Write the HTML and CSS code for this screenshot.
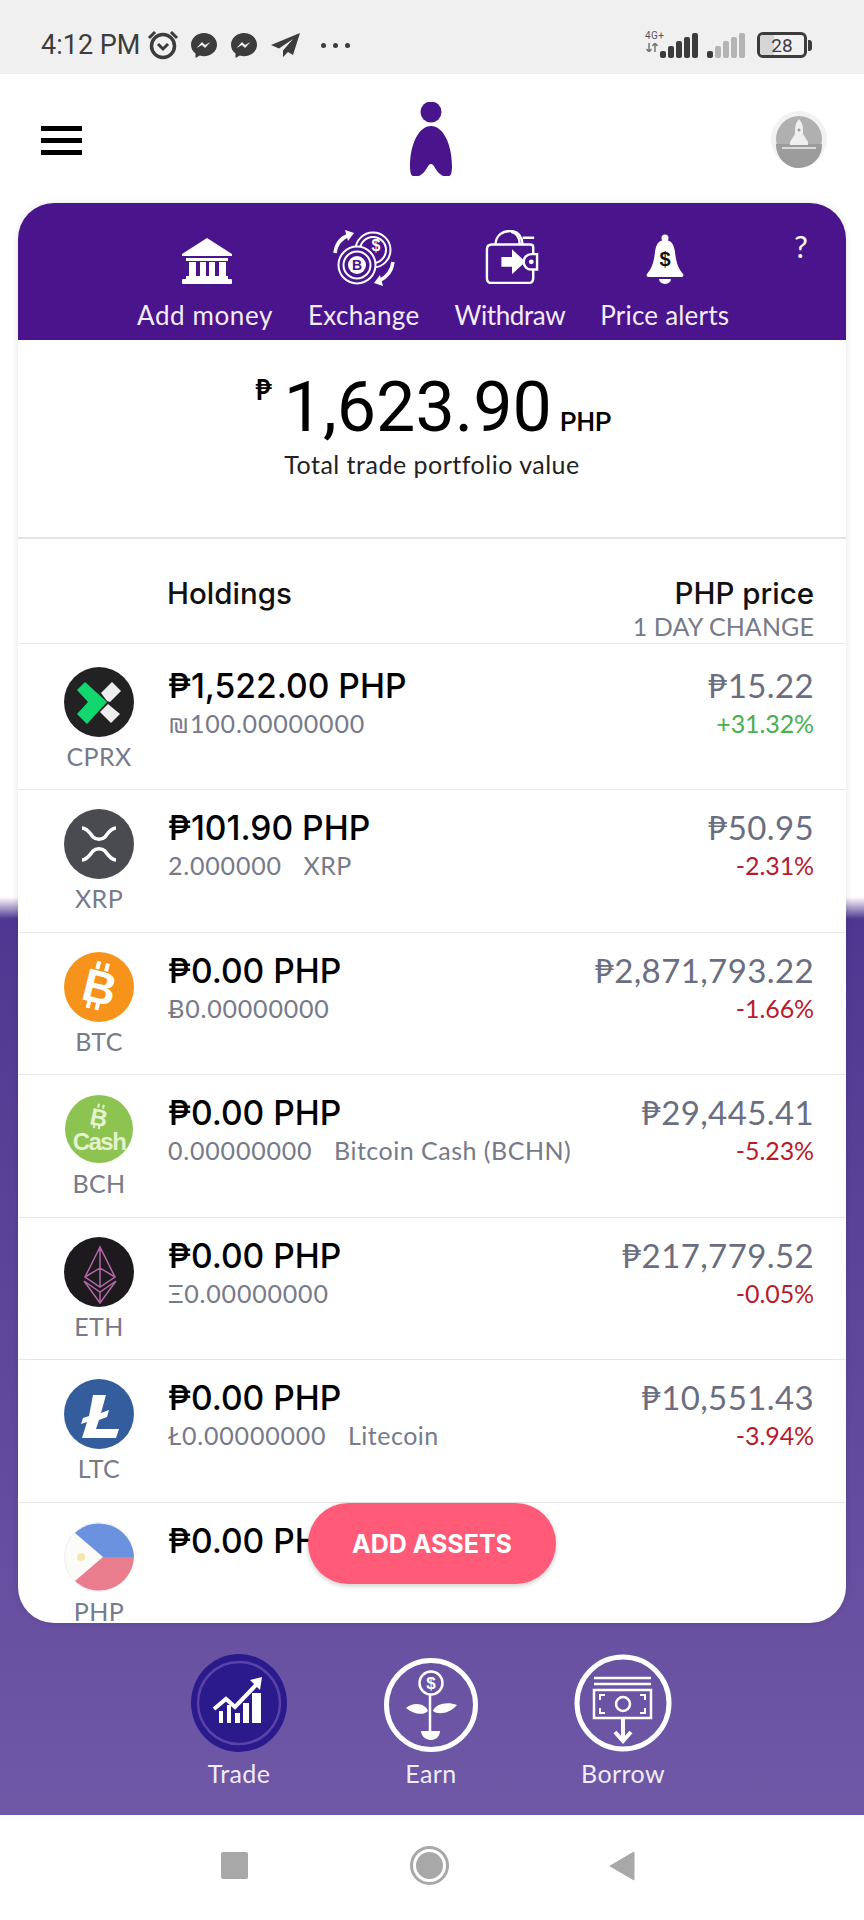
FILE: index.html
```html
<!DOCTYPE html>
<html lang="en">
<head>
    <meta charset="UTF-8">
    <meta name="viewport" content="width=device-width, initial-scale=1.0">
    <title>Trade portfolio</title>
    <link rel="stylesheet" href="styles.css">
</head>
<body>

    <!-- STATUS BAR -->
    <div class="status-bar">
        <div class="status-left">
            <span class="status-time">4:12 PM</span>
            <svg class="st-alarm" width="32" height="30" viewBox="0 0 32 30">
                <circle cx="16" cy="16" r="11.5" fill="none" stroke="#3c3c3c" stroke-width="3.5"/>
                <path d="M11 14l5 5 5-5" fill="none" stroke="#3c3c3c" stroke-width="3"/>
                <path d="M2 8l6-6M30 8l-6-6" stroke="#3c3c3c" stroke-width="3"/>
            </svg>
            <svg class="st-msg" width="26" height="25" viewBox="0 0 26 25">
                <path d="M13 0C5.800 0 0 5.200 0 11.800c0 3.600 1.700 6.600 4.500 8.700V25l4.300-2.400c1.300.4 2.700.6 4.200.6 7.200 0 13-5 13-11.400S20.200 0 13 0z" fill="#3c3c3c"/>
                <path d="M5.500 15l5.500-6 3 3 5.500-3-5.500 6-3-3z" fill="#f0f0f0"/>
            </svg>
            <svg class="st-msg" width="26" height="25" viewBox="0 0 26 25">
                <path d="M13 0C5.800 0 0 5.200 0 11.800c0 3.600 1.700 6.600 4.500 8.700V25l4.300-2.400c1.300.4 2.700.6 4.200.6 7.200 0 13-5 13-11.400S20.200 0 13 0z" fill="#3c3c3c"/>
                <path d="M5.500 15l5.500-6 3 3 5.500-3-5.500 6-3-3z" fill="#f0f0f0"/>
            </svg>
            <svg class="st-plane" width="29" height="24" viewBox="0 0 29 24">
                <path d="M29 0L0 12l8 3.500L22 6 12 17.500V24l5-5 5 3z" fill="#3c3c3c"/>
            </svg>
            <span class="st-dots"><i></i><i></i><i></i></span>
        </div>
        <div class="status-right">
            <div class="st-net">
                <span class="st-4g">4G+</span>
                <svg width="14" height="9" viewBox="0 0 14 9"><path d="M4 0v9M1.500 6L4 9l2.500-3M10 9V0M7.500 3L10 0l2.500 3" fill="none" stroke="#777" stroke-width="1.500"/></svg>
            </div>
            <svg class="st-bars" width="38" height="25" viewBox="0 0 38 25">
                <rect x="0" y="18" width="6" height="7" rx="2" fill="#3c3c3c"/><rect x="8" y="13" width="6" height="12" rx="2" fill="#3c3c3c"/><rect x="16" y="8" width="6" height="17" rx="2" fill="#3c3c3c"/><rect x="24" y="4" width="6" height="21" rx="2" fill="#3c3c3c"/><rect x="32" y="0" width="6" height="25" rx="2" fill="#3c3c3c"/>
            </svg>
            <svg class="st-bars" width="38" height="25" viewBox="0 0 38 25">
                <rect x="0" y="18" width="6" height="7" rx="2" fill="#3c3c3c"/><rect x="8" y="13" width="6" height="12" rx="2" fill="#b4b4b4"/><rect x="16" y="8" width="6" height="17" rx="2" fill="#b4b4b4"/><rect x="24" y="4" width="6" height="21" rx="2" fill="#b4b4b4"/><rect x="32" y="0" width="6" height="25" rx="2" fill="#b4b4b4"/>
            </svg>
            <div class="battery"><span class="battery-level"></span><span class="battery-num">28</span></div>
            <span class="battery-nub"></span>
        </div>
    </div>

    <!-- HEADER -->
    <div class="app-header">
        <div class="burger"><i></i><i></i><i></i></div>
        <svg class="logo" width="44" height="74" viewBox="0 0 44 74">
            <ellipse cx="22" cy="10" rx="10.500" ry="10.500" fill="#4a148c"/>
            <path d="M22 24C10 24 1 42 1 64c0 6 1 10 3 10h6c4-2 6-5 8-8 1.500-3 2.500-4 4-4s2.500 1 4 4c2 3 4 6 8 8h6c2 0 3-4 3-10C43 42 34 24 22 24z" fill="#4a148c"/>
        </svg>
        <svg class="avatar" width="58" height="58" viewBox="0 0 58 58">
            <circle cx="29" cy="29" r="28" fill="#f2f2f2"/>
            <circle cx="29" cy="29" r="23" fill="#b0b0b0"/>
            <path d="M6 34h46a23 23 0 0 1-46 2z" fill="#9c9c9c"/>
            <path d="M29 9c3 3 4 7 4 11v4l5 8v3H20v-3l5-8v-4c0-4 1-8 4-11z" fill="#efefef"/>
            <path d="M12 38h34" stroke="#efefef" stroke-width="1.500"/>
            <circle cx="29" cy="20" r="1.500" fill="#999"/>
        </svg>
    </div>

    <div class="main">
        <div class="card">

            <!-- ACTIONS -->
            <div class="actions">
                <div class="action">
                    <svg class="ic-bank" width="52" height="46" viewBox="0 0 52 46" fill="#fff">
                        <path d="M26 0l25 16v2H1v-2z"/>
                        <rect x="5" y="20" width="42" height="3"/>
                        <rect x="8" y="24" width="7" height="14"/><rect x="19" y="24" width="6" height="14"/><rect x="28" y="24" width="6" height="14"/><rect x="38" y="24" width="7" height="14"/>
                        <rect x="5" y="38" width="42" height="3"/>
                        <rect x="1" y="41" width="50" height="5" rx="1"/>
                    </svg>
                    <span>Add money</span>
                </div>
                <div class="action action-exchange">
                    <svg class="ic-exchange" width="64" height="58" viewBox="0 0 64 58" fill="none" stroke="#fff" stroke-width="2">
                        <circle cx="41" cy="21" r="17.500"/>
                        <circle cx="41" cy="21" r="13"/>
                        <circle cx="25" cy="36" r="18.500" fill="#4a148c"/>
                        <circle cx="25" cy="36" r="13.500"/>
                        <circle cx="25" cy="36" r="9" fill="#fff" stroke="none"/>
                        <text x="25" y="41" class="coin-b">B</text>
                        <text x="44" y="22" class="coin-d">$</text>
                        <path d="M3 24C4 15 9 9 17 6" stroke-width="3.500"/>
                        <path d="M13 1l9 3-6 8z" fill="#fff" stroke="none"/>
                        <path d="M61 33c-1 9-6 15-14 19" stroke-width="3.500"/>
                        <path d="M51 57l-9-3 6-8z" fill="#fff" stroke="none"/>
                    </svg>
                    <span>Exchange</span>
                </div>
                <div class="action action-withdraw">
                    <svg class="ic-wallet" width="54" height="54" viewBox="0 0 54 56" fill="none" stroke="#fff" stroke-width="2.500">
                        <path d="M10 15C10 5 18 1 25 1c8 0 12 4 13 14"/>
                        <path d="M26 2c6 1 9 6 9 13M38 8h12"/>
                        <path d="M49 25v-7c0-2-1-3-3-3H6c-3 0-5 2-5 5v30c0 3 2 5 5 5h38c3 0 5-2 5-5v-9"/>
                        <path d="M16 28h11v-8l14 13-14 13v-8H16z" fill="#fff" stroke="none"/>
                        <path d="M53 25h-6a8 8 0 0 0 0 16h6z"/>
                        <circle cx="47" cy="33" r="2.500" fill="#fff" stroke="none"/>
                    </svg>
                    <span>Withdraw</span>
                </div>
                <div class="action action-alerts">
                    <svg width="38" height="50" viewBox="0 0 38 50" fill="#fff">
                        <circle cx="19" cy="4" r="3.500"/>
                        <path d="M19 6c7 0 9 5 10 12 1 8 2 15 8 22 1 1 0 3-1 3H2c-1 0-2-2-1-3 6-7 7-14 8-22 1-7 3-12 10-12z"/>
                        <path d="M13 45h12a6 5 0 0 1-12 0z"/>
                        <text x="19" y="32" class="bell-d">$</text>
                    </svg>
                    <span>Price alerts</span>
                </div>
                <div class="help">?</div>
            </div>

            <!-- TOTAL -->
            <div class="total">
                <div class="total-line">
                    <span class="total-cur">₱</span>
                    <span class="total-num">1,623.90</span>
                    <span class="total-php">PHP</span>
                </div>
                <div class="total-label">Total trade portfolio value</div>
            </div>

            <!-- HOLDINGS -->
            <div class="holdings-head">
                <div class="head-name">Holdings</div>
                <div class="head-right">
                    <div class="head-name">PHP price</div>
                    <div class="head-sub">1 DAY CHANGE</div>
                </div>
            </div>

            <div class="row row-first">
                <div class="coin">
                    <svg width="70" height="70" viewBox="0 0 70 70">
                        <circle cx="35" cy="35" r="35" fill="#222"/>
                        <path d="M21 15l22 20-20 22-10-10 11-12-11-12z" fill="#12d66e"/>
                        <path d="M48 15l9 9-11 11-3-1-6-8z" fill="#eee"/>
                        <path d="M44 37l12 10-9 9-11-11z" fill="#eee"/>
                    </svg>
                    <span>CPRX</span>
                </div>
                <div class="info">
                    <div class="amount">₱1,522.00 PHP</div>
                    <div class="sub">₪100.00000000</div>
                </div>
                <div class="quote">
                    <div class="price">₱15.22</div>
                    <div class="up">+31.32%</div>
                </div>
            </div>

            <div class="row">
                <div class="coin">
                    <svg width="70" height="70" viewBox="0 0 70 70">
                        <circle cx="35" cy="35" r="35" fill="#4a4b50"/>
                        <path d="M18 19c5 0 8 5 11 9 3 3 9 3 12 0 3-4 6-9 11-9M18 51c5 0 8-5 11-9 3-3 9-3 12 0 3 4 6 9 11 9" fill="none" stroke="#fff" stroke-width="3.500"/>
                    </svg>
                    <span>XRP</span>
                </div>
                <div class="info">
                    <div class="amount">₱101.90 PHP</div>
                    <div class="sub">2.000000 &nbsp; <span class="sub-name">XRP</span></div>
                </div>
                <div class="quote">
                    <div class="price">₱50.95</div>
                    <div class="down">-2.31%</div>
                </div>
            </div>

            <div class="row">
                <div class="coin">
                    <svg width="70" height="70" viewBox="0 0 70 70">
                        <circle cx="35" cy="35" r="35" fill="#f7931a"/>
                        <g transform="rotate(14 35 35)">
                            <text x="36" y="51" class="btc-b">B</text>
                            <path d="M29 10v8M38 10v8M29 50v8M38 50v8" stroke="#fff" stroke-width="4"/>
                        </g>
                    </svg>
                    <span>BTC</span>
                </div>
                <div class="info">
                    <div class="amount">₱0.00 PHP</div>
                    <div class="sub">Ƀ0.00000000</div>
                </div>
                <div class="quote">
                    <div class="price">₱2,871,793.22</div>
                    <div class="down">-1.66%</div>
                </div>
            </div>

            <div class="row">
                <div class="coin">
                    <svg width="70" height="70" viewBox="0 0 70 70">
                        <circle cx="35" cy="35" r="34" fill="#8dc351"/>
                        <g transform="rotate(12 35 24)">
                            <text x="35" y="32" class="bch-b">B</text>
                            <path d="M32 10v4M37 10v4M32 31v4M37 31v4" stroke="#e4f2cf" stroke-width="2"/>
                        </g>
                        <text x="35" y="56" class="bch-cash">Cash</text>
                    </svg>
                    <span>BCH</span>
                </div>
                <div class="info">
                    <div class="amount">₱0.00 PHP</div>
                    <div class="sub">0.00000000 &nbsp; <span class="sub-name">Bitcoin Cash (BCHN)</span></div>
                </div>
                <div class="quote">
                    <div class="price">₱29,445.41</div>
                    <div class="down">-5.23%</div>
                </div>
            </div>

            <div class="row">
                <div class="coin">
                    <svg width="70" height="70" viewBox="0 0 70 70">
                        <circle cx="35" cy="35" r="35" fill="#1c1a1d"/>
                        <path d="M36 10L21 40l15 10 15-10zM36 10v40M21 40l15-9 15 9M20 44l16 22 16-22-16 11zM36 55v9" fill="none" stroke="#b266a8" stroke-width="1.500"/>
                    </svg>
                    <span>ETH</span>
                </div>
                <div class="info">
                    <div class="amount">₱0.00 PHP</div>
                    <div class="sub">Ξ0.00000000</div>
                </div>
                <div class="quote">
                    <div class="price">₱217,779.52</div>
                    <div class="down">-0.05%</div>
                </div>
            </div>

            <div class="row">
                <div class="coin">
                    <svg width="70" height="70" viewBox="0 0 70 70">
                        <circle cx="35" cy="35" r="35" fill="#345d9d"/>
                        <path d="M29 16h13l-5 18 8-3-2 7-8 3-3 9h23l-3 9H18l5-16-6 2 2-6 6-2z" fill="#fff"/>
                    </svg>
                    <span>LTC</span>
                </div>
                <div class="info">
                    <div class="amount">₱0.00 PHP</div>
                    <div class="sub">Ł0.00000000 &nbsp; <span class="sub-name">Litecoin</span></div>
                </div>
                <div class="quote">
                    <div class="price">₱10,551.43</div>
                    <div class="down">-3.94%</div>
                </div>
            </div>

            <div class="row">
                <div class="coin">
                    <svg width="70" height="70" viewBox="0 0 70 70">
                        <circle cx="35" cy="35" r="34.500" fill="#fbfbf8" stroke="#efefef"/>
                        <path d="M11 11A35 35 0 0 1 70 35H39z" fill="#6a92de"/>
                        <path d="M11 59A35 35 0 0 0 70 35H39z" fill="#e97d8e"/>
                        <circle cx="17" cy="35" r="4" fill="#f7e6ad"/>
                    </svg>
                    <span>PHP</span>
                </div>
                <div class="info">
                    <div class="amount">₱0.00 PHP</div>
                </div>
            </div>

            <div class="add-assets">ADD ASSETS</div>
        </div>

        <!-- TABS -->
        <div class="tabs">
            <div class="tab">
                <svg width="98" height="100" viewBox="0 0 98 100">
                    <ellipse cx="49" cy="50" rx="48" ry="49" fill="#2a1a8c"/>
                    <circle cx="49" cy="50" r="41" fill="none" stroke="#5a42a8" stroke-width="2.500"/>
                    <path d="M24 56l12-10 9 8 22-23" fill="none" stroke="#fff" stroke-width="4"/>
                    <path d="M60 27l12-3-2 13z" fill="#fff"/>
                    <path d="M29 58h4v12h-4zM37 52h4v18h-4zM45 60h5v10h-5zM53 50h6v20h-6zM62 40h9v30h-9z" fill="#fff"/>
                </svg>
                <span>Trade</span>
            </div>
            <div class="tab">
                <svg width="98" height="100" viewBox="0 0 98 100">
                    <circle cx="49" cy="52" r="44.500" fill="none" stroke="#fff" stroke-width="5"/>
                    <circle cx="49" cy="30" r="11.500" fill="none" stroke="#fff" stroke-width="2.500"/>
                    <text x="49" y="36" class="earn-d">$</text>
                    <path d="M48 42v36" stroke="#fff" stroke-width="2.500"/>
                    <path d="M46 58c-2-7-14-10-22-3 7 6 17 8 22 3zM51 58c2-7 14-10 24-6-8 9-19 10-24 6z" fill="#fff"/>
                    <path d="M39 78h19c0 5-4 9-9 9s-10-4-10-9z" fill="#fff"/>
                </svg>
                <span>Earn</span>
            </div>
            <div class="tab">
                <svg width="98" height="100" viewBox="0 0 98 100" fill="none" stroke="#fff">
                    <circle cx="49" cy="50" r="46" stroke-width="5"/>
                    <path d="M20 25h57M20 31h57" stroke-width="2.500"/>
                    <rect x="20" y="37" width="57" height="28" stroke-width="2.500"/>
                    <circle cx="49" cy="51" r="7" stroke-width="2.500"/>
                    <path d="M26 47v-5h5M71 47v-5h-5M26 55v5h5M71 55v5h-5" stroke-width="2"/>
                    <path d="M49 65v22M41 79l8 9 8-9" stroke-width="4"/>
                </svg>
                <span>Borrow</span>
            </div>
        </div>
    </div>

    <!-- NAV BAR -->
    <div class="nav-bar">
        <span class="nav-square"></span>
        <span class="nav-circle"><i></i></span>
        <svg width="26" height="30" viewBox="0 0 26 30"><path d="M25 1v28L1 15z" fill="#a8a8a8" stroke="#a8a8a8" stroke-linejoin="round"/></svg>
    </div>

</body>
</html>
```

FILE: styles.css
```css
* {
    box-sizing: border-box;
}

body {
    margin: 0;
    width: 864px;
    height: 1920px;
    overflow: hidden;
    display: flex;
    flex-direction: column;
    font-family: "Lato", "DejaVu Sans", sans-serif;
    letter-spacing: 0.4px;
    background: #fff;
}

i {
    display: block;
}

/* STATUS BAR */
.status-bar {
    height: 74px;
    flex: none;
    background: #f0f0f0;
    padding: 29px 52px 0 41px;
    display: flex;
    justify-content: space-between;
    align-items: flex-start;
}

.status-left,
.status-right {
    display: flex;
    align-items: center;
    height: 32px;
}

.status-time {
    font-family: "Roboto", sans-serif;
    font-size: 27px;
    letter-spacing: 0;
    color: #3c3c3c;
    margin-right: 7px;
}

.st-msg {
    margin-left: 12px;
}

.st-msg + .st-msg {
    margin-left: 14px;
}

.st-plane {
    margin-left: 14px;
}

.st-dots {
    display: flex;
    gap: 7px;
    margin-left: 21px;
}

.st-dots i {
    width: 5px;
    height: 5px;
    border-radius: 50%;
    background: #3c3c3c;
}

.st-net {
    display: flex;
    flex-direction: column;
    gap: 2px;
    width: 28px;
    margin-right: -13px;
    margin-top: -8px;
}

.st-4g {
    font-family: "Roboto", sans-serif;
    font-size: 10px;
    line-height: 11px;
    color: #555;
}

.st-bars {
    margin-right: 9px;
}

.battery {
    position: relative;
    width: 50px;
    height: 26px;
    margin-left: 3px;
    border: 3px solid #3c3c3c;
    border-radius: 6px;
    overflow: hidden;
    display: flex;
    align-items: center;
    justify-content: center;
}

.battery-level {
    position: absolute;
    left: 0;
    top: 0;
    bottom: 0;
    width: 14px;
    background: #d5d5d5;
}

.battery-num {
    position: relative;
    font-family: "Roboto", sans-serif;
    font-size: 19px;
    letter-spacing: 0;
    color: #3c3c3c;
}

.battery-nub {
    width: 4px;
    height: 11px;
    margin-left: 1px;
    background: #3c3c3c;
    border-radius: 0 3px 3px 0;
}

/* HEADER */
.app-header {
    height: 129px;
    flex: none;
    background: #fff;
    display: flex;
    justify-content: space-between;
    align-items: flex-start;
    padding: 28px 36px 0 41px;
}

.burger {
    width: 41px;
    margin-top: 24px;
    display: flex;
    flex-direction: column;
    gap: 7px;
}

.burger i {
    height: 5px;
    background: #000;
}

.logo {
    margin-left: 10px;
}

.avatar {
    margin-top: 8px;
}

/* MAIN */
.main {
    flex: 1;
    padding: 0 18px;
    background: linear-gradient(to bottom, #fff 0, #fff 694px, #4f3791 716px, #6f58a6 100%);
}

.card {
    position: relative;
    height: 1420px;
    background: #fff;
    border-radius: 36px;
    overflow: hidden;
    box-shadow: 0 0 6px rgba(0, 0, 0, 0.12);
}

/* ACTIONS */
.actions {
    position: relative;
    height: 137px;
    background: #4a148c;
    color: #fff;
    padding-left: 119px;
    display: flex;
    gap: 35px;
}

.action {
    display: flex;
    flex-direction: column;
    align-items: center;
    justify-content: flex-end;
    gap: 15px;
    padding-bottom: 9px;
    font-size: 26px;
    letter-spacing: 0.6px;
    white-space: nowrap;
    color: #f3ecf8;
}

.action-exchange {
    letter-spacing: 0.35px;
}

.action-withdraw {
    letter-spacing: -0.4px;
}

.action-alerts {
    letter-spacing: 0.2px;
}

.ic-bank {
    margin-left: 4px;
}

.ic-exchange {
    margin-bottom: -3px;
}

.ic-wallet {
    margin-left: 4px;
}

.help {
    position: absolute;
    left: 776px;
    top: 24px;
    font-size: 31px;
}

.coin-b,
.coin-d,
.bell-d,
.earn-d {
    font-family: "Liberation Sans", sans-serif;
    font-weight: 700;
    text-anchor: middle;
    stroke: none;
    letter-spacing: 0;
}

.coin-b {
    font-size: 14px;
    fill: #4a148c;
}

.coin-d {
    font-size: 16px;
    fill: #fff;
}

.bell-d {
    font-size: 20px;
    fill: #111;
}

.earn-d {
    font-size: 17px;
    fill: #fff;
}

/* TOTAL */
.total {
    height: 199px;
    border-bottom: 2px solid #e2e2e2;
    padding-top: 26px;
    text-align: center;
}

.total-line {
    display: flex;
    justify-content: center;
    align-items: baseline;
    margin-left: 3px;
    height: 82px;
    color: #000;
    font-family: "Roboto", sans-serif;
    letter-spacing: 0;
}

.total-cur {
    font-size: 28px;
    align-self: flex-start;
    margin: 6px 12px 0 0;
    font-family: "Lato", "DejaVu Sans", sans-serif;
    font-weight: 700;
}

.total-num {
    font-size: 70px;
    line-height: 82px;
}

.total-php {
    font-size: 26px;
    font-weight: 500;
    margin-left: 8px;
}

.total-label {
    font-size: 25px;
    color: #222;
    letter-spacing: 0.5px;
    margin-top: 1px;
}

/* HOLDINGS */
.holdings-head {
    height: 105px;
    padding: 37px 32px 0 149px;
    display: flex;
    justify-content: space-between;
    border-bottom: 1px solid #e6e6e6;
}

.head-name {
    font-family: "Inter", sans-serif;
    font-size: 29.500px;
    letter-spacing: 0;
    line-height: 34px;
    font-weight: 500;
    color: #111;
}

.head-right {
    text-align: right;
}

.head-sub {
    font-size: 25px;
    line-height: 30px;
    letter-spacing: 0.1px;
    color: #777a88;
    margin-top: 1px;
}

/* ROWS */
.row {
    position: relative;
    height: 142.500px;
    padding: 19px 32px 0 46px;
    display: flex;
    border-bottom: 1px solid #e6e6e6;
}

.row-first {
    height: 146px;
    padding-top: 23px;
}

.coin {
    width: 70px;
    flex: none;
    display: flex;
    flex-direction: column;
    align-items: center;
    font-size: 25px;
    line-height: 30px;
    color: #777a88;
    gap: 4px;
}

.coin svg {
    display: block;
}

.info {
    flex: 1;
    margin-left: 34px;
    padding-top: 1px;
    white-space: nowrap;
}

.amount {
    font-family: "Inter", "DejaVu Sans", sans-serif;
    font-size: 33.600px;
    letter-spacing: 0;
    line-height: 36px;
    font-weight: 500;
    color: #000;
}

.sub {
    font-size: 25px;
    line-height: 30px;
    letter-spacing: 0.8px;
    margin-top: 4px;
    color: #777a88;
}

.sub-name {
    letter-spacing: 0.5px;
}

.quote {
    text-align: right;
    white-space: nowrap;
}

.price {
    font-size: 33px;
    line-height: 36px;
    color: #6b6e80;
}

.up,
.down {
    font-size: 25px;
    line-height: 30px;
    letter-spacing: -0.1px;
    margin-top: 5px;
}

.up {
    color: #4caf50;
}

.down {
    color: #b71c2c;
}

.btc-b {
    font-family: "Liberation Sans", sans-serif;
    font-weight: 700;
    font-size: 46px;
    fill: #fff;
    text-anchor: middle;
}

.bch-b,
.bch-cash {
    font-family: "Liberation Sans", sans-serif;
    font-weight: 700;
    fill: #e4f2cf;
    text-anchor: middle;
}

.bch-b {
    font-size: 24px;
}

.bch-cash {
    font-size: 24px;
    letter-spacing: -1.500px;
}

.add-assets {
    position: absolute;
    left: 290px;
    top: 1300px;
    width: 248px;
    height: 81px;
    border-radius: 41px;
    background: #ff5a78;
    color: #fff;
    font-family: "Inter", sans-serif;
    font-size: 25px;
    letter-spacing: 0;
    font-weight: 700;
    display: flex;
    align-items: center;
    justify-content: center;
    box-shadow: 0 2px 5px rgba(0, 0, 0, 0.2);
}

/* TABS */
.tabs {
    display: flex;
    justify-content: center;
    padding: 30px 2px 0 0;
}

.tab {
    width: 192px;
    display: flex;
    flex-direction: column;
    align-items: center;
    font-size: 25px;
    line-height: 30px;
    color: #f1ecf7;
    gap: 5px;
}

/* NAV BAR */
.nav-bar {
    height: 105px;
    flex: none;
    background: #fff;
    display: flex;
    justify-content: center;
    align-items: center;
    padding: 0 8px 4px 0;
}

.nav-square {
    width: 27px;
    height: 27px;
    background: #a8a8a8;
    border-radius: 2px;
}

.nav-circle {
    width: 39px;
    height: 39px;
    margin: 0 160px 0 162px;
    border: 3px solid #a8a8a8;
    border-radius: 50%;
    display: flex;
    align-items: center;
    justify-content: center;
}

.nav-circle i {
    width: 27px;
    height: 27px;
    border-radius: 50%;
    background: #a8a8a8;
}
```
